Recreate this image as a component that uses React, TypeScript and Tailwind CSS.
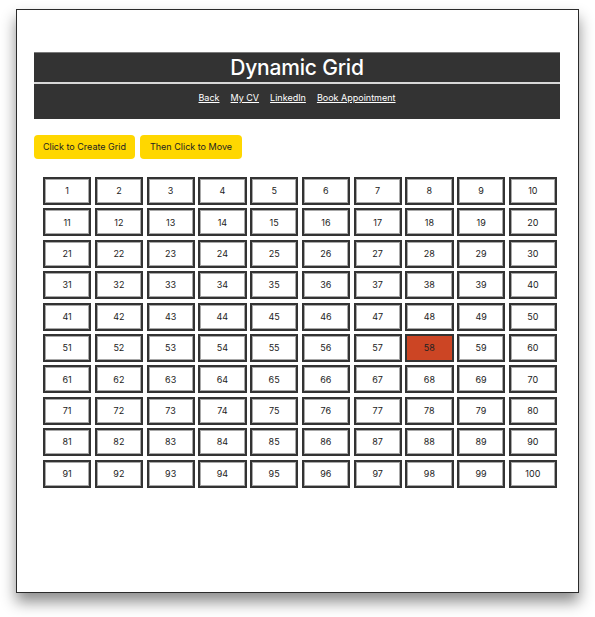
import React from "react";

export default function App() {
  const cells = Array.from({ length: 100 }, (_, i) => i + 1);
  return (
    <div
      className="w-[595px] h-[617px] bg-white pt-[9px] pl-[16px]"
      style={{ fontFamily: "Inter, 'Liberation Sans', sans-serif" }}
    >
      <div className="w-[563px] h-[584px] border border-[#2b2b2b] bg-white shadow-[0_9px_14px_rgba(0,0,0,0.45)] pt-[42px] pl-[17px]">
        <div className="w-[526px]">
          <div className="bg-[#333333] border-t border-[#7a7a7a] h-[30px] flex items-center justify-center text-white text-[21px] font-medium leading-none tracking-[-0.2px]">
            Dynamic Grid
          </div>
          <div className="h-[2px] bg-[#d8d8d8]" />
          <div className="bg-[#333333] h-[35px] flex justify-center pt-[8px] gap-[11px] text-[9px] leading-[12px] text-white">
            <a className="underline">Back</a>
            <a className="underline">My CV</a>
            <a className="underline">LinkedIn</a>
            <a className="underline">Book Appointment</a>
          </div>
        </div>
        <div className="flex gap-[5px] mt-[16px]">
          <button className="w-[101px] h-[24px] rounded-[4px] bg-[#ffd700] text-[9px] text-[#222]">
            Click to Create Grid
          </button>
          <button className="w-[102px] h-[24px] rounded-[4px] bg-[#ffd700] text-[9px] text-[#222]">
            Then Click to Move
          </button>
        </div>
        <div className="ml-[9px] mt-[18px] w-[514px] grid grid-cols-10 gap-x-[3.5px] gap-y-[3.4px]">
          {cells.map((n) => (
            <div
              key={n}
              className={
                n === 58
                  ? "h-[28px] border-2 border-[#333] bg-[#cc4524] flex items-center justify-center text-[9px] text-[#222]"
                  : "h-[28px] border-2 border-[#333] bg-white shadow-[inset_0_0_0_1px_#a8a8a8] flex items-center justify-center text-[9px] text-[#222]"
              }
            >
              {n}
            </div>
          ))}
        </div>
      </div>
    </div>
  );
}
